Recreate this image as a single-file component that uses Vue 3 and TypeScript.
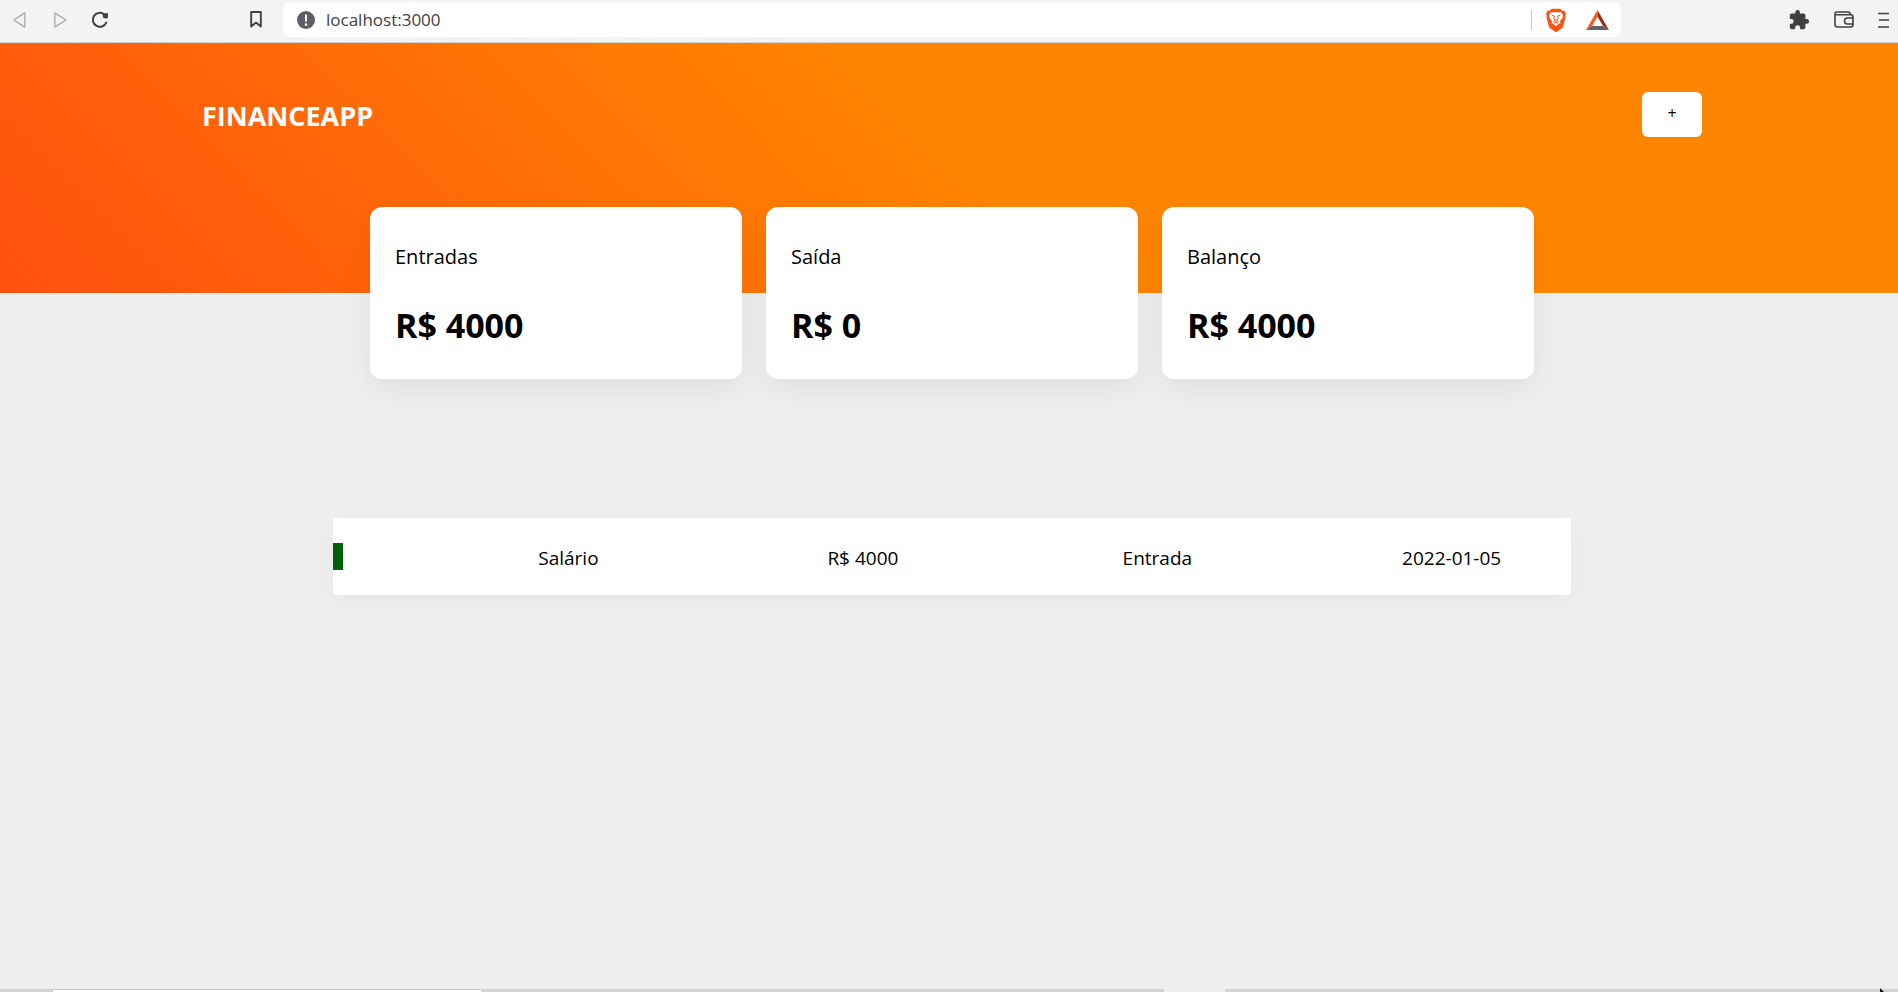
<script setup lang="ts">
import { computed, ref } from 'vue'

interface Transaction {
  id: number
  name: string
  amount: number
  kind: 'Entrada' | 'Saída'
  date: string
}

const address = ref('localhost:3000')

const transactions = ref<Transaction[]>([
  { id: 1, name: 'Salário', amount: 4000, kind: 'Entrada', date: '2022-01-05' },
])

const total = (kind: Transaction['kind']): number =>
  transactions.value.filter((t) => t.kind === kind).reduce((sum, t) => sum + t.amount, 0)

const cards = computed(() => [
  { title: 'Entradas', value: total('Entrada') },
  { title: 'Saída', value: total('Saída') },
  { title: 'Balanço', value: total('Entrada') - total('Saída') },
])
</script>

<template>
  <div class="window">
    <nav class="toolbar">
      <button class="tool" type="button" aria-label="Voltar">
        <svg width="14" height="18" viewBox="0 0 14 18"><path d="M11.8 2v14L1.5 9.6q-.9-.6 0-1.2L11.8 2Z" fill="none" stroke="#b5b3b0" stroke-width="1.5" stroke-linejoin="round" /></svg>
      </button>
      <button class="tool" type="button" aria-label="Avançar">
        <svg width="14" height="18" viewBox="0 0 14 18"><path d="M1.8 2v14l10.3-6.4q.9-.6 0-1.2L1.8 2Z" fill="none" stroke="#b5b3b0" stroke-width="1.5" stroke-linejoin="round" /></svg>
      </button>
      <button class="tool reload" type="button" aria-label="Recarregar">
        <svg width="18" height="18" viewBox="0 0 18 18"><path d="M13.3 3.4A7 7 0 1 0 15.3 11.6" fill="none" stroke="#404043" stroke-width="2" stroke-linecap="round" /><path d="M11.5 2.7 16 2q1 0 1 1v3q-.5 2-2.500 1.500L12 6.500Z" fill="#404043" /></svg>
      </button>
      <button class="tool bookmark" type="button" aria-label="Favorito">
        <svg width="14" height="17" viewBox="0 0 14 17"><path d="M2.200 1h9.600v14.600L7 11.600l-4.800 4V1Z" fill="none" stroke="#404043" stroke-width="1.900" stroke-linejoin="round" /></svg>
      </button>
      <div class="address">
        <svg width="18" height="18" viewBox="0 0 18 18" aria-hidden="true"><circle cx="9" cy="9" r="9" fill="#5f5e66" /><path d="M8 3.600h2v7H8Z" fill="#fff" /><circle cx="9" cy="13.600" r="1.300" fill="#fff" /></svg>
        <input v-model="address" class="url" type="text" aria-label="Endereço" />
        <span class="divider"></span>
        <button class="tool" type="button" aria-label="Brave Shields">
          <svg width="20" height="24" viewBox="0 0 20 24">
            <path d="M5.500.8h9L16.200 2.700l2-.2L20 5.500l-.7 2.200.3 1.500-2.500 9.300q-.5 1.500-1.700 2.300L10.800 23.700q-.8.5-1.600 0L4.600 20.800q-1.200-.8-1.700-2.300L.4 9.200l.3-1.500L0 5.500l1.800-3 2 .2L5.500.8Z" fill="#fb5417" />
            <path d="m5.300 4 2.500.5L10 4l2.200.5 2.500-.5 2.300 3.200-.5 2.800-2.500 3 .5 2-2 1L10 18.300 7.500 16l-2-1 .5-2-2.500-3L3 7.200 5.300 4Z" fill="#fff" />
            <path d="m5.800 7.300 2.500.7-.4 2.500 1.100 2.200-1.600 1M14.200 7.300l-2.500.7.4 2.500-1.100 2.200 1.600 1M8 15.200l2-1.200 2 1.200M10 11v2.500" fill="none" stroke="#fb5417" stroke-width="1" />
          </svg>
        </button>
        <button class="tool" type="button" aria-label="Brave Rewards">
          <svg width="23" height="20" viewBox="0 0 23 20"><path d="M11.500 0v6.400L6 16 0 20 11.500 0Z" fill="#ff5619" /><path d="M11.500 0 23 20l-6-4-5.500-9.600V0Z" fill="#993016" /><path d="M0 20l6-4h11l6 4H0Z" fill="#62616d" /></svg>
        </button>
      </div>
      <div class="extras">
        <button class="tool" type="button" aria-label="Extensões">
          <svg width="22" height="22" viewBox="0 0 24 24"><path d="M20.500 11H19V7c0-1.100-.9-2-2-2h-4V3.500a2.500 2.500 0 0 0-5 0V5H4c-1.100 0-2 .9-2 2v3.800h1.500a2.700 2.700 0 0 1 0 5.400H2V20c0 1.100.9 2 2 2h3.800v-1.500a2.700 2.700 0 0 1 5.400 0V22H17c1.100 0 2-.9 2-2v-4h1.500a2.500 2.500 0 0 0 0-5Z" fill="#404043" /></svg>
        </button>
        <button class="tool" type="button" aria-label="Carteira">
          <svg width="20" height="17" viewBox="0 0 20 17"><path d="M1 4V3q0-2 2-2h11q2 0 2.500 2.500M1 3.800h15.500q2.500 0 2.500 2.200v7.500q0 2.500-2.500 2.500h-13Q1 16 1 13.500V3.800ZM19 7h-5.500a3 3 0 0 0 0 6H19" fill="none" stroke="#404043" stroke-width="1.600" /></svg>
        </button>
        <button class="tool" type="button" aria-label="Menu">
          <svg width="12" height="16" viewBox="0 0 12 16"><path d="M0 1.500h11M1 8h10M0 15h11" stroke="#404043" stroke-width="1.700" /></svg>
        </button>
      </div>
    </nav>

    <header class="header">
      <div class="header-inner">
        <h1 class="brand">FINANCEAPP</h1>
        <button class="add" type="button" aria-label="Adicionar transação">+</button>
      </div>
    </header>

    <main class="content">
      <section class="cards">
        <article v-for="card in cards" :key="card.title" class="card">
          <p class="card-title">{{ card.title }}</p>
          <strong class="card-value">R$ {{ card.value }}</strong>
        </article>
      </section>

      <table class="transactions" aria-label="Transações">
        <colgroup>
          <col class="col-status" /><col class="col-text" /><col class="col-text" /><col class="col-text" /><col />
        </colgroup>
        <tbody>
          <tr v-for="t in transactions" :key="t.id">
            <td class="status"><span class="mark" :class="{ out: t.kind === 'Saída' }"></span></td>
            <td>{{ t.name }}</td>
            <td>R$ {{ t.amount }}</td>
            <td>{{ t.kind }}</td>
            <td class="date">{{ t.date }}</td>
          </tr>
        </tbody>
      </table>
    </main>

    <footer class="taskbar">
      <span class="search"></span>
      <span class="active"></span>
      <svg class="pointer" width="4" height="4" viewBox="0 0 4 4" aria-hidden="true"><path d="M0 0 4 4H0Z" fill="#111" /></svg>
    </footer>
  </div>
</template>

<style>
body {
  margin: 0;
  background: #eee;
}
</style>

<style scoped>
.window {
  display: flex;
  flex-direction: column;
  min-height: 100vh;
  color: #000;
  font-family: 'Segoe UI', 'Open Sans', 'Noto Sans', sans-serif;
}

.window *,
.window {
  box-sizing: border-box;
}

.toolbar {
  display: flex;
  align-items: center;
  gap: 26px;
  padding: 2px 8px 5px 13px;
  border-bottom: 1px solid #d0d2d3;
  background: #f3f3f1;
}

.tool {
  display: flex;
  padding: 0;
  border: 0;
  background: none;
}

.reload {
  margin-left: -2px;
}

.bookmark {
  margin-left: 114px;
}

.address {
  display: flex;
  flex: 1;
  align-items: center;
  gap: 20px;
  height: 35px;
  margin-left: -6px;
  padding: 0 12px 0 14px;
  border-radius: 6px;
  background: #fff;
}

.url {
  flex: 1;
  min-width: 0;
  margin-left: -9px;
  padding: 0;
  border: 0;
  outline: 0;
  background: none;
  color: #404043;
  font: 17px/24px 'Segoe UI', 'Open Sans', sans-serif;
}

.divider {
  width: 1px;
  height: 20px;
  margin-right: -6px;
  background: #c9c9c9;
}

.extras {
  display: flex;
  align-items: center;
  gap: 24px;
  margin-left: 141px;
}

.header {
  height: 250px;
  padding: 49px 0 0 6px;
  background: linear-gradient(45deg, #ff5010, #ff8500 51%);
}

.header-inner {
  display: flex;
  justify-content: space-between;
  max-width: 1500px;
  margin: 0 auto;
}

.brand {
  margin: 0;
  color: #fff;
  font-size: 27px;
  font-weight: 700;
  line-height: 48px;
}

.add {
  width: 60px;
  height: 45px;
  padding: 0 0 4px;
  border: 0;
  border-radius: 6px;
  background: #fff;
  color: #000;
  font: 16px/20px 'Segoe UI', 'Open Sans', sans-serif;
}

.content {
  flex: 1;
  padding-left: 6px;
}

.cards {
  display: grid;
  grid-template-columns: repeat(3, 1fr);
  gap: 24px;
  max-width: 1164px;
  margin: -86px auto 0;
}

.card {
  padding: 36px 25px 32px;
  border-radius: 12px;
  background: #fff;
  box-shadow: 0 10px 30px rgba(0, 0, 0, 0.06);
}

.card-title {
  margin: 0 0 32px;
  font-size: 20px;
  line-height: 28px;
}

.card-value {
  display: block;
  font-size: 34px;
  font-weight: 700;
  line-height: 44px;
}

.transactions {
  width: 65.4%;
  margin: 139px auto 0;
  border-collapse: collapse;
  table-layout: fixed;
  background: #fff;
  box-shadow: 0 8px 24px rgba(0, 0, 0, 0.03);
  font-size: 19px;
  line-height: 27px;
  text-align: center;
}

.transactions td {
  padding: 27px 0 23px;
}

.transactions .status {
  padding: 25px 0;
}

.transactions .date {
  padding-left: 28px;
}

.col-status {
  width: 7.1%;
}

.col-text {
  width: 23.8%;
}

.mark {
  display: block;
  width: 10px;
  height: 27px;
  background: #006008;
}

.mark.out {
  background: #b00;
}

.taskbar {
  position: relative;
  display: flex;
  justify-content: space-between;
  height: 3px;
  padding: 0 673px 0 53px;
  background: #d2d3d2;
}

.search {
  width: 428px;
  border-top: 1px solid #c8c8c8;
  background: #fff;
}

.active {
  width: 61px;
  background: #eee;
}

.pointer {
  position: absolute;
  right: 14px;
  bottom: 0;
}
</style>
